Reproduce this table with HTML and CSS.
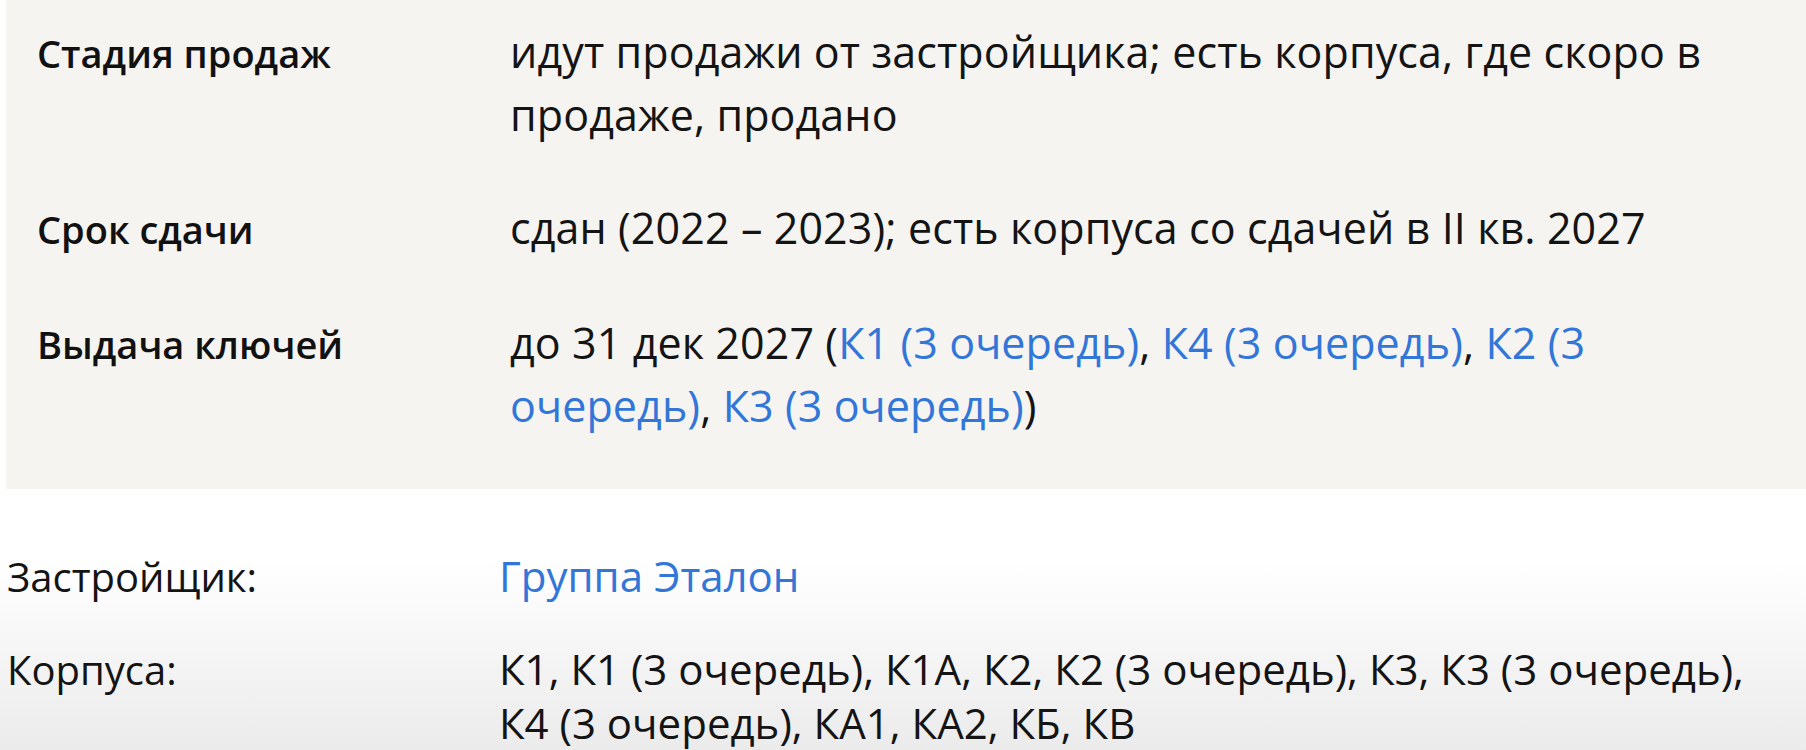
FILE: index.html
```html
<!DOCTYPE html>
<html lang="ru">
<head>
    <meta charset="UTF-8">
    <meta name="viewport" content="width=device-width, initial-scale=1.0">
    <title>Характеристики ЖК</title>
    <link rel="stylesheet" href="styles.css">
</head>
<body>
    <div class="panel">
        <div class="row">
            <div class="label">Стадия продаж</div>
            <div class="value">идут продажи от застройщика; есть корпуса, где скоро в продаже, продано</div>
        </div>
        <div class="row">
            <div class="label">Срок сдачи</div>
            <div class="value">сдан (2022 – 2023); есть корпуса со сдачей в II кв. 2027</div>
        </div>
        <div class="row">
            <div class="label">Выдача ключей</div>
            <div class="value">до 31 дек 2027 (<a href="#">К1 (3 очередь)</a>, <a href="#">К4 (3 очередь)</a>, <a href="#">К2 (3 очередь)</a>, <a href="#">К3 (3 очередь)</a>)</div>
        </div>
    </div>
    <div class="info">
        <div class="info-row">
            <div class="info-label">Застройщик:</div>
            <div class="info-value"><a href="#">Группа Эталон</a></div>
        </div>
        <div class="info-row">
            <div class="info-label">Корпуса:</div>
            <div class="info-value">К1, К1 (3 очередь), К1А, К2, К2 (3 очередь), К3, К3 (3 очередь), К4 (3 очередь), КА1, КА2, КБ, КВ</div>
        </div>
    </div>
</body>
</html>
```
FILE: styles.css
```css
body {
    margin: 0;
    padding: 0;
    height: 750px;
    overflow: hidden;
    font-family: "Open Sans", Arial, sans-serif;
    color: #141414;
    background: linear-gradient(180deg, #ffffff 0, #ffffff 560px, #ebebeb 750px);
}

a {
    color: #3276d8;
    text-decoration: none;
}

.panel {
    margin-left: 6px;
    padding: 20px 0 52px 31px;
    background-color: #f5f4f1;
    display: flex;
    flex-direction: column;
    gap: 50px;
}

.row {
    display: grid;
    grid-template-columns: 473px 1230px;
    align-items: baseline;
    line-height: 63px;
}

.label {
    font-size: 38px;
    font-weight: 600;
    color: #111;
}

.value {
    font-size: 43px;
    letter-spacing: 0.1px;
}

.info {
    padding: 60px 0 0 7px;
    display: flex;
    flex-direction: column;
    gap: 38px;
}

.info-row {
    display: grid;
    grid-template-columns: 492px 1290px;
    align-items: baseline;
    line-height: 54px;
    font-size: 42px;
}

.info-label {
    font-size: 40px;
}
```
